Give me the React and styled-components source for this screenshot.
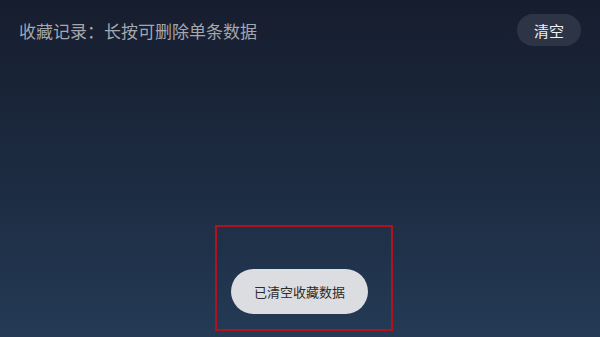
import React from "react";
import styled, { createGlobalStyle } from "styled-components";

const GlobalStyle = createGlobalStyle`
  html, body {
    margin: 0;
    padding: 0;
  }
  body {
    font-family: "Noto Sans CJK SC", "Noto Sans", sans-serif;
  }
`;

// 页面
const Page = styled.div`
  width: 100vw;
  height: 100vh;
  min-height: 337px;
  display: flex;
  flex-direction: column;
  background: linear-gradient(180deg, #161d2e 0%, #1c2a40 50%, #243a55 100%);
  overflow: hidden;
`;

const Header = styled.div`
  height: 60px;
  padding: 0 19px;
  display: flex;
  align-items: center;
  justify-content: space-between;
`;

const Title = styled.div`
  color: #a3a7ae;
  font-size: 17px;
  margin-top: 1px;
`;

const ClearButton = styled.button`
  width: 64px;
  height: 32px;
  border: none;
  border-radius: 16px;
  background: #2d3446;
  color: #eef0f3;
  font-family: inherit;
  font-size: 15px;
  cursor: pointer;
`;

const Spacer = styled.div`
  flex: 1;
`;

// 红色标注框
const Highlight = styled.div`
  align-self: center;
  margin: 0 0 6px 8px;
  width: 178px;
  height: 106px;
  box-sizing: border-box;
  border: 2px solid #b3121c;
  display: flex;
  align-items: flex-end;
  padding: 0 0 15px 14px;
`;

const Toast = styled.div`
  width: 137px;
  height: 45px;
  border-radius: 23px;
  background: #dcdde1;
  color: #2b2b2b;
  font-size: 13px;
  display: flex;
  align-items: center;
  justify-content: center;
`;

const App = () => {
  return (
    <>
      <GlobalStyle />
      <Page>
        <Header>
          <Title>收藏记录：长按可删除单条数据</Title>
          <ClearButton>清空</ClearButton>
        </Header>
        <Spacer />
        <Highlight>
          <Toast>已清空收藏数据</Toast>
        </Highlight>
      </Page>
    </>
  );
};

export default App;
